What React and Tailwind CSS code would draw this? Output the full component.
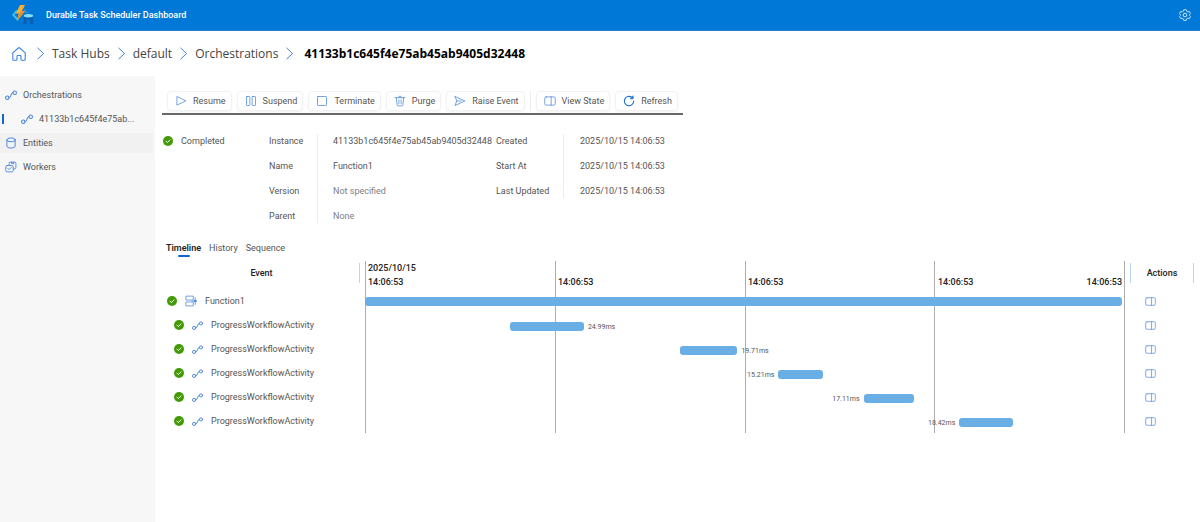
import { useState } from 'react';

const TOOLS = [
  { label: 'Resume', icon: PlayIcon },
  { label: 'Suspend', icon: PauseIcon },
  { label: 'Terminate', icon: StopIcon },
  { label: 'Purge', icon: TrashIcon },
  { label: 'Raise Event', icon: SendIcon },
  { divider: true },
  { label: 'View State', icon: PanelIcon },
  { label: 'Refresh', icon: RefreshIcon },
];

// start and width are percentages of the timeline
const EVENTS = [
  { name: 'Function1', start: 0, width: 99.6, root: true },
  { name: 'ProgressWorkflowActivity', start: 19.1, width: 9.7, time: '24.99ms' },
  { name: 'ProgressWorkflowActivity', start: 41.4, width: 7.6, time: '19.71ms' },
  { name: 'ProgressWorkflowActivity', start: 54.4, width: 5.9, time: '15.21ms', before: true },
  { name: 'ProgressWorkflowActivity', start: 65.6, width: 6.7, time: '17.11ms', before: true },
  { name: 'ProgressWorkflowActivity', start: 78.2, width: 7.1, time: '18.42ms', before: true },
];

const INSTANCE_ID = '41133b1c645f4e75ab45ab9405d32448';

function Icon({ children, className = 'size-3' }) {
  return (
    <svg
      viewBox="0 0 16 16"
      fill="none"
      stroke="currentColor"
      strokeLinecap="round"
      strokeLinejoin="round"
      className={`shrink-0 text-[#4a86d8] ${className}`}
      aria-hidden="true"
    >
      {children}
    </svg>
  );
}

function PlayIcon() {
  return <Icon><path d="M2.5 2.5v11L14 8z" /></Icon>;
}

function PauseIcon() {
  return (
    <Icon>
      <rect x="2" y="2" width="4.5" height="12" rx="0.8" />
      <rect x="9.5" y="2" width="4.5" height="12" rx="0.8" />
    </Icon>
  );
}

function StopIcon() {
  return <Icon><rect x="2" y="2" width="12" height="12" rx="0.8" /></Icon>;
}

function TrashIcon() {
  return (
    <Icon>
      <path d="M1.5 3.5h13M6 3.5a2 2 0 0 1 4 0M3 3.5l1.2 10a1.2 1.2 0 0 0 1.2 1h5.2a1.2 1.2 0 0 0 1.2-1l1.2-10M6.5 6.5v5M9.5 6.5v5" />
    </Icon>
  );
}

function SendIcon() {
  return <Icon><path d="M1.5 2l13 6-13 6 2-6zM3.5 8h6" /></Icon>;
}

function PanelIcon({ className }) {
  return (
    <Icon className={className}>
      <rect x="1" y="2.5" width="14" height="11" rx="2" />
      <path d="M9.5 2.5v11" />
    </Icon>
  );
}

function RefreshIcon() {
  return (
    <Icon>
      <path stroke="#1a6fd0" strokeWidth="1.5" d="M14.2 8a6.2 6.2 0 1 1-2.6-5" />
      <path fill="#1a6fd0" stroke="#1a6fd0" d="M13.5 1.5v3.5h-3.5z" />
    </Icon>
  );
}

function FlowIcon({ className }) {
  return (
    <Icon className={className}>
      <circle cx="3" cy="11.5" r="2.3" strokeWidth="1.4" />
      <circle cx="13" cy="5" r="2.3" strokeWidth="1.4" />
      <path strokeWidth="1.4" d="M5.5 11.5c3.5 0 1.5-6.5 5-6.5" />
    </Icon>
  );
}

function DatabaseIcon() {
  return (
    <Icon>
      <ellipse cx="8" cy="3.8" rx="5.5" ry="2.5" strokeWidth="1.3" />
      <path strokeWidth="1.3" d="M2.5 3.8v8.4c0 1.4 2.5 2.5 5.5 2.5s5.5-1.1 5.5-2.5V3.8" />
    </Icon>
  );
}

function WorkersIcon() {
  return (
    <Icon>
      <path strokeWidth="1.2" d="M5.5 5V3a1.5 1.5 0 0 1 1.5-1.5h6A1.5 1.5 0 0 1 14.5 3v6a1.5 1.5 0 0 1-1.5 1.5h-1.5M8.5 1.5v2h3v-2" />
      <rect x="1" y="6" width="10" height="8.5" rx="2" strokeWidth="1.2" />
      <path strokeWidth="1.2" d="M3.5 9.5l2 2 3-3.2" />
    </Icon>
  );
}

function OrchestratorIcon() {
  return (
    <Icon>
      <path d="M10.5 6.7H1.2V1.5h9.3zM10.5 9.3H1.2v5.2h9.3z" />
      <path d="M13.5 3.5v9M9 8h6.5" />
      <circle cx="13.5" cy="8" r="1.2" fill="currentColor" />
    </Icon>
  );
}

function CheckIcon() {
  return (
    <svg viewBox="0 0 16 16" className="size-[10px] shrink-0" role="img" aria-label="Completed">
      <circle cx="8" cy="8" r="8" fill="#429a05" />
      <path d="M4.8 8.3l2.2 2.2 4.2-4.3" fill="none" stroke="#fff" strokeWidth="1.6" strokeLinecap="round" />
    </svg>
  );
}

function Chevron() {
  return (
    <svg viewBox="0 0 7 13" fill="none" stroke="#3f83da" className="h-[13px] w-[7px] shrink-0" aria-hidden="true">
      <path d="M.5.8l6 5.7-6 5.7" />
    </svg>
  );
}

function Logo() {
  return (
    <svg viewBox="0 0 22 20" className="h-5 w-[22px]" aria-hidden="true">
      <path d="M5 5.5L1.2 9.8 6 15" fill="none" stroke="#35c1ee" strokeWidth="2" />
      <path d="M12 4.5l3.5 4" fill="none" stroke="#1f8fe0" strokeWidth="2" />
      <path d="M11.5 12v7h3v-4H18v4h3v-7z" fill="#0a5fb4" />
      <ellipse cx="16.5" cy="10.7" rx="4.6" ry="1.7" fill="#7fe0f7" />
      <path d="M8 0h5L9.8 6.2H13L4.8 16l2-7.4H3.8z" fill="#fbb034" />
      <path d="M9.8 6.2H13L4.8 16l2-7.4z" fill="#f08c28" />
    </svg>
  );
}

function GearIcon() {
  return (
    <svg viewBox="0 0 16 16" fill="none" stroke="#cfe5f8" strokeWidth="1.3" strokeLinejoin="round" className="size-3" aria-hidden="true">
      <path d="M6.3 1h3.4l.6 2 1.3.8 2.1-.5 1.7 2.9L14 7.7v.8l1.4 1.4-1.7 2.9-2.1-.5-1.3.8-.6 2H6.3l-.6-2-1.3-.8-2.1.5L.6 9.9 2 8.5v-.8L.6 6.200l1.700-2.900 2.100.5 1.300-.8z" />
      <circle cx="8" cy="8" r="2.4" />
    </svg>
  );
}

function Details({ rows, className }) {
  return (
    <dl className={`relative grid gap-y-[11px] before:absolute before:inset-y-0 before:w-px before:bg-[#ededed] ${className}`}>
      {rows.map(([label, value, muted]) => (
        <div key={label} className="contents">
          <dt>{label}</dt>
          <dd className={muted ? 'text-[#808080]' : ''}>{value}</dd>
        </div>
      ))}
    </dl>
  );
}

function GridLines() {
  return (
    <div className="absolute inset-0 grid grid-cols-4 border-r border-[#adadad]">
      <div className="border-l border-[#adadad]" />
      <div className="border-l border-[#adadad]" />
      <div className="border-l border-[#adadad]" />
      <div className="border-l border-[#adadad]" />
    </div>
  );
}

function EventRow({ event }) {
  return (
    <tr className="h-6">
      <td className="p-0">
        <div className={`flex items-center gap-2 ${event.root ? 'pl-[9px]' : 'pl-4'}`}>
          <CheckIcon />
          {event.root ? <OrchestratorIcon className="size-[11px]" /> : <FlowIcon className="size-[11px]" />}
          <span>{event.name}</span>
        </div>
      </td>
      <td className="relative p-0">
        <GridLines />
        <div className={`relative flex items-center text-[7px] leading-[10px] text-[#555] ${event.root ? '' : 'pt-[3px]'}`}>
          <div className={`shrink-0 text-right ${event.root ? '' : 'pr-1'}`} style={{ width: `${event.start}%` }}>
            {event.before && event.time}
          </div>
          <div className="h-[9px] shrink-0 rounded-[3px] bg-[#69afe5]" style={{ width: `${event.width}%` }} />
          {!event.before && <span className="pl-1">{event.time}</span>}
        </div>
      </td>
      <td className="p-0">
        <button type="button" aria-label="View event state" className="ml-5 block">
          <PanelIcon className="size-[11px]" />
        </button>
      </td>
    </tr>
  );
}

export default function App() {
  const [tab, setTab] = useState('Timeline');

  return (
    <div className="flex min-h-screen flex-col bg-white font-['Roboto','Noto_Sans',sans-serif] text-[9px] leading-[14px] text-[#555]">
      <header className="flex h-[31px] items-center border-b border-[#2b7fd6] bg-[#0078d7] pr-[9px] pl-3">
        <Logo />
        <h1 className="ml-3 flex-1 font-medium text-white">Durable Task Scheduler Dashboard</h1>
        <button type="button" aria-label="Settings">
          <GearIcon />
        </button>
      </header>

      <nav aria-label="Breadcrumb" className="flex h-[45px] items-center gap-2 px-3 font-['Open_Sans','Noto_Sans',sans-serif] text-xs text-[#444]">
        <a href="#home" aria-label="Home" className="mr-[3px]">
          <svg viewBox="0 0 14 14" fill="none" stroke="#3f83da" strokeWidth="1.1" strokeLinejoin="round" className="size-[14px]">
            <path d="M.8 5.9L6.3 1a1 1 0 0 1 1.4 0l5.5 4.9v6.6a.8.8 0 0 1-.8.8H9.8a.8.8 0 0 1-.8-.8V9.2a.7.7 0 0 0-.7-.7H5.7a.7.7 0 0 0-.7.7v3.3a.8.8 0 0 1-.8.8H1.600a.8.8 0 0 1-.8-.8z" />
          </svg>
        </a>
        <Chevron />
        <a href="#hubs">Task Hubs</a>
        <Chevron />
        <a href="#default">default</a>
        <Chevron />
        <a href="#orchestrations">Orchestrations</a>
        <Chevron />
        <span className="ml-[3px] font-bold text-black">{INSTANCE_ID}</span>
      </nav>

      <div className="flex flex-1">
        <aside className="flex w-[155px] shrink-0 flex-col gap-1 bg-[#f7f7f7] pt-[9px]">
          <a href="#orchestrations" className="flex h-5 items-center gap-1.5 pl-[5px]">
            <FlowIcon className="size-3" />
            Orchestrations
          </a>
          <a href="#instance" className="flex h-5 items-center" aria-current="page">
            <span className="mr-[17px] ml-0.5 h-[10px] w-0.5 bg-[#1464d2]" />
            <FlowIcon className="size-3" />
            <span className="ml-1.5">41133b1c645f4e75ab...</span>
          </a>
          <a href="#entities" className="mr-0.5 flex h-5 items-center gap-1.5 bg-[#f1f1f1] pl-[5px]">
            <DatabaseIcon />
            Entities
          </a>
          <a href="#workers" className="flex h-5 items-center gap-1.5 pl-[5px]">
            <WorkersIcon />
            Workers
          </a>
        </aside>

        <main className="min-w-0 flex-1 pt-[15px] pl-[3px]">
          <div className="ml-1 flex w-fit gap-[5px] border-b-2 border-[#686868] px-[5px] pb-0.5">
            {TOOLS.map((tool, i) =>
              tool.divider ? (
                <span key={i} className="h-5 w-px bg-[#ededed]" />
              ) : (
                <button
                  key={tool.label}
                  type="button"
                  className="flex h-5 items-center gap-1.5 rounded-sm border border-[#f2f2f2] pr-[5px] pl-[7px] shadow-xs"
                >
                  <tool.icon />
                  {tool.label}
                </button>
              )
            )}
          </div>

          <section className="mt-[19px] ml-[5px] flex items-start">
            <div className="flex w-[106px] items-center gap-2">
              <CheckIcon />
              Completed
            </div>
            <Details
              className="w-[227px] grid-cols-[64px_1fr] before:left-12"
              rows={[
                ['Instance', INSTANCE_ID],
                ['Name', 'Function1'],
                ['Version', 'Not specified', true],
                ['Parent', 'None', true],
              ]}
            />
            <Details
              className="grid-cols-[84px_1fr] before:left-[67px]"
              rows={[
                ['Created', '2025/10/15 14:06:53'],
                ['Start At', '2025/10/15 14:06:53'],
                ['Last Updated', '2025/10/15 14:06:53'],
              ]}
            />
          </section>

          <div role="tablist" className="mt-[18px] ml-2 flex gap-2">
            {['Timeline', 'History', 'Sequence'].map((name) => (
              <button
                key={name}
                type="button"
                role="tab"
                aria-selected={tab === name}
                onClick={() => setTab(name)}
                className={`flex flex-col items-center ${tab === name ? 'font-semibold text-[#222]' : ''}`}
              >
                {name}
                <span className={`h-0.5 w-3 rounded-full ${tab === name ? 'bg-[#1464d2]' : ''}`} />
              </button>
            ))}
          </div>

          <table className="mt-1 w-full table-fixed border-collapse">
            <thead className="text-[#222]">
              <tr className="h-7 align-top">
                <th className="w-[207px] p-0 pt-0.5 font-medium">
                  <div className="mr-[5px] flex h-5 items-center justify-center border-r border-[#b9d6f2] pl-1.5">Event</div>
                </th>
                <th className="relative p-0 font-medium">
                  <GridLines />
                  <div className="relative px-[3px] text-left">2025/10/15</div>
                  <div className="relative grid grid-cols-4 text-left">
                    <span className="pl-[3px]">14:06:53</span>
                    <span className="pl-[3px]">14:06:53</span>
                    <span className="pl-[3px]">14:06:53</span>
                    <span className="flex justify-between px-[3px]">
                      <span>14:06:53</span>
                      <span>14:06:53</span>
                    </span>
                  </div>
                </th>
                <th className="w-[75px] p-0 pt-0.5 font-medium">
                  <div className="mr-1.5 ml-[5px] flex h-5 items-center justify-center border-x border-[#b9d6f2]">Actions</div>
                </th>
              </tr>
            </thead>
            <tbody>
              {EVENTS.map((event, i) => (
                <EventRow key={i} event={event} />
              ))}
            </tbody>
          </table>
        </main>
      </div>
    </div>
  );
}
